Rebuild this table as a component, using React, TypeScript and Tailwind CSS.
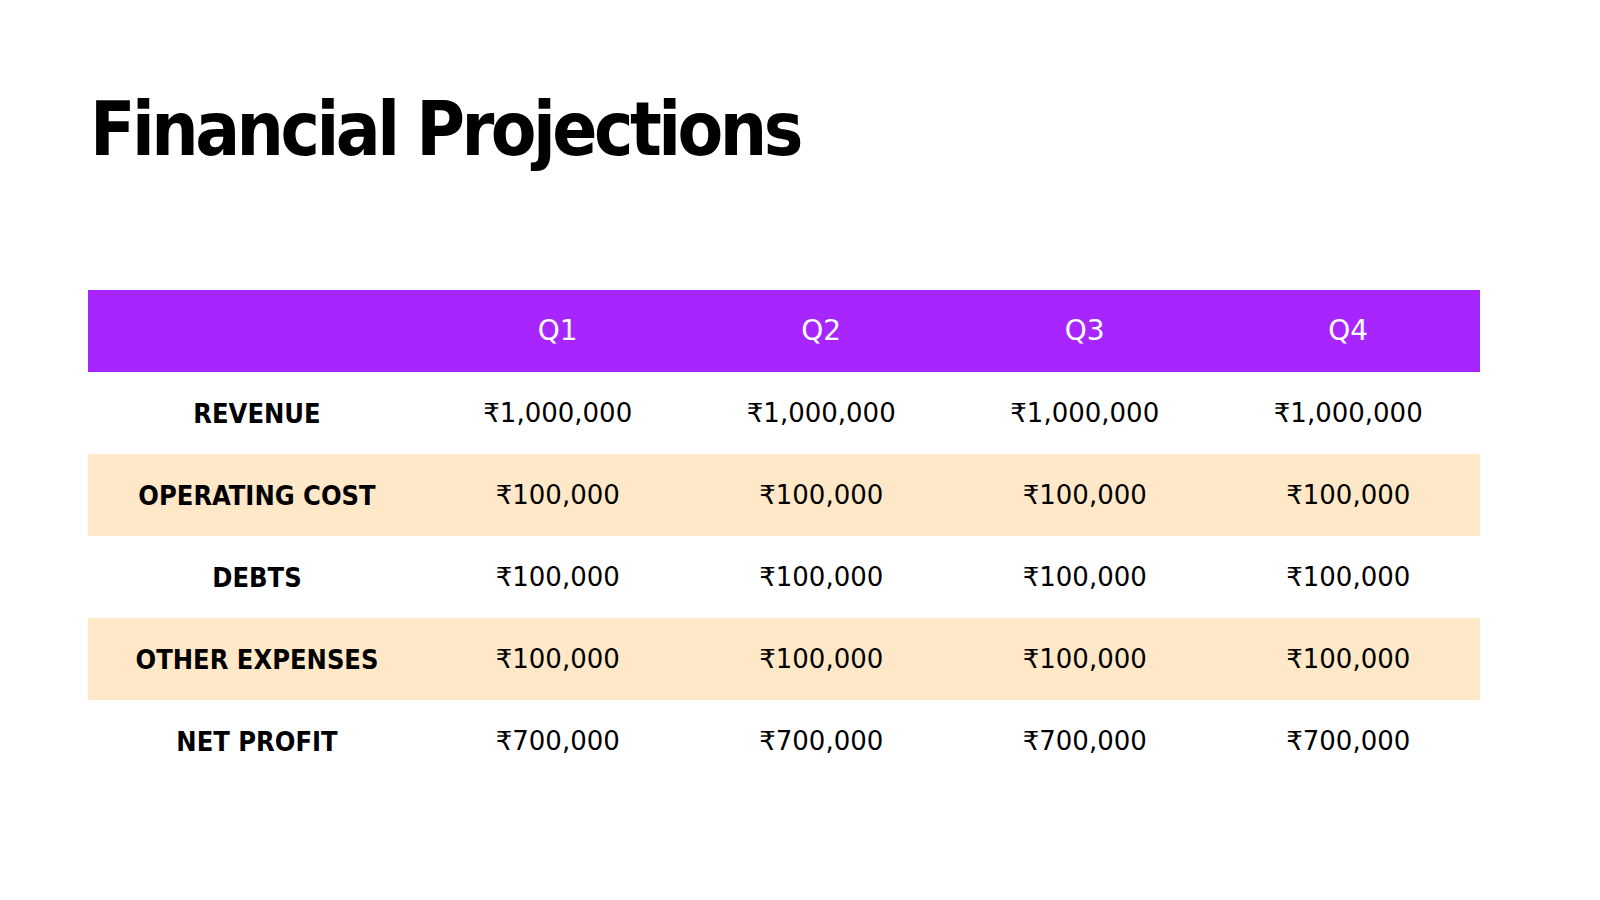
import React from 'react';

interface Row {
    label: string;
    values: string[];
    shaded: boolean;
}

export function App() {
    const quarters = ['Q1', 'Q2', 'Q3', 'Q4'];

    const rows: Row[] = [
        { label: 'REVENUE', values: ['₹1,000,000', '₹1,000,000', '₹1,000,000', '₹1,000,000'], shaded: false },
        { label: 'OPERATING COST', values: ['₹100,000', '₹100,000', '₹100,000', '₹100,000'], shaded: true },
        { label: 'DEBTS', values: ['₹100,000', '₹100,000', '₹100,000', '₹100,000'], shaded: false },
        { label: 'OTHER EXPENSES', values: ['₹100,000', '₹100,000', '₹100,000', '₹100,000'], shaded: true },
        { label: 'NET PROFIT', values: ['₹700,000', '₹700,000', '₹700,000', '₹700,000'], shaded: false },
    ];

    return (
        <div className="w-[1600px] h-[900px] bg-white overflow-hidden">
            <div className="px-[88px] pt-[84px]">
                {/* Title */}
                <h1 className="pl-[2px] text-[74px] leading-[90px] font-bold text-black tracking-[-3.5px] font-['DejaVu_Sans_Condensed','DejaVu_Sans',sans-serif]">
                    Financial Projections
                </h1>

                {/* Table */}
                <div className="mt-[116px] w-[1392px]">
                    <div className="grid grid-cols-[338px_1fr_1fr_1fr_1fr] h-[82px] items-center bg-[#a726ff]">
                        <div />
                        {quarters.map((q) => (
                            <div key={q} className="text-center text-white text-[28px] font-['DejaVu_Sans',sans-serif]">
                                {q}
                            </div>
                        ))}
                    </div>
                    {rows.map((row) => (
                        <div
                            key={row.label}
                            className={`grid grid-cols-[338px_1fr_1fr_1fr_1fr] h-[82px] items-center ${row.shaded ? 'bg-[#fee8c7]' : 'bg-white'}`}
                        >
                            <div className="pt-[2px] text-center text-black text-[27px] font-bold font-['DejaVu_Sans_Condensed','DejaVu_Sans',sans-serif]">
                                {row.label}
                            </div>
                            {row.values.map((v, i) => (
                                <div key={i} className="text-center text-black text-[26px] font-['DejaVu_Sans',sans-serif]">
                                    {v}
                                </div>
                            ))}
                        </div>
                    ))}
                </div>
            </div>
        </div>
    );
}

export default App;
